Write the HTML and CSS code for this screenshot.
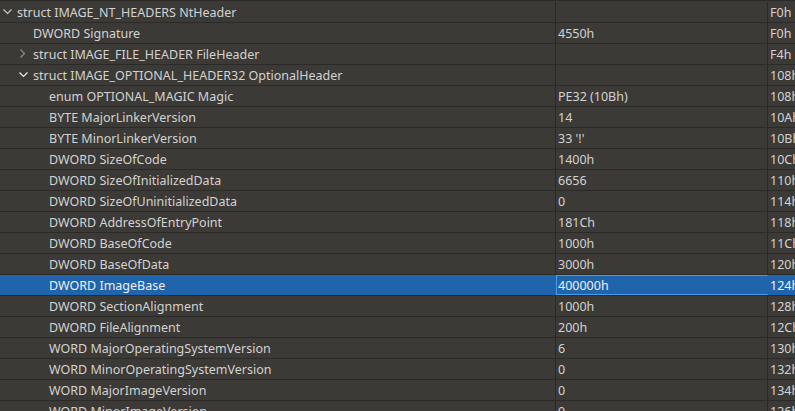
FILE: index.html
```html
<!DOCTYPE html>
<html>
<head>
<meta charset="utf-8">
<link rel="stylesheet" href="styles.css">
</head>
<body>
<div class="tree">
  <div class="row"><div class="c name l0"><span class="tog"><svg class="exp0" width="16" height="20" viewBox="0 0 16 20"><polyline points="2.5,7.5 6.5,11.5 10.5,7.5" /></svg></span>struct IMAGE_NT_HEADERS NtHeader</div><div class="c val"></div><div class="c off">F0h</div></div>
  <div class="row"><div class="c name l1"><span class="tog"></span>DWORD Signature</div><div class="c val">4550h</div><div class="c off">F0h</div></div>
  <div class="row"><div class="c name l1"><span class="tog"><svg class="col" width="16" height="20" viewBox="0 0 16 20"><polyline points="3.5,5.5 7.5,9.5 3.5,13.5" /></svg></span>struct IMAGE_FILE_HEADER FileHeader</div><div class="c val"></div><div class="c off">F4h</div></div>
  <div class="row"><div class="c name l1"><span class="tog"><svg class="exp" width="16" height="20" viewBox="0 0 16 20"><polyline points="2.5,7.5 6.5,11.5 10.5,7.5" /></svg></span>struct IMAGE_OPTIONAL_HEADER32 OptionalHeader</div><div class="c val"></div><div class="c off">108h</div></div>
  <div class="row"><div class="c name l2"><span class="tog"></span>enum OPTIONAL_MAGIC Magic</div><div class="c val">PE32 (10Bh)</div><div class="c off">108h</div></div>
  <div class="row"><div class="c name l2"><span class="tog"></span>BYTE MajorLinkerVersion</div><div class="c val">14</div><div class="c off">10Ah</div></div>
  <div class="row"><div class="c name l2"><span class="tog"></span>BYTE MinorLinkerVersion</div><div class="c val">33 '!'</div><div class="c off">10Bh</div></div>
  <div class="row"><div class="c name l2"><span class="tog"></span>DWORD SizeOfCode</div><div class="c val">1400h</div><div class="c off">10Ch</div></div>
  <div class="row"><div class="c name l2"><span class="tog"></span>DWORD SizeOfInitializedData</div><div class="c val">6656</div><div class="c off">110h</div></div>
  <div class="row"><div class="c name l2"><span class="tog"></span>DWORD SizeOfUninitializedData</div><div class="c val">0</div><div class="c off">114h</div></div>
  <div class="row"><div class="c name l2"><span class="tog"></span>DWORD AddressOfEntryPoint</div><div class="c val">181Ch</div><div class="c off">118h</div></div>
  <div class="row"><div class="c name l2"><span class="tog"></span>DWORD BaseOfCode</div><div class="c val">1000h</div><div class="c off">11Ch</div></div>
  <div class="row"><div class="c name l2"><span class="tog"></span>DWORD BaseOfData</div><div class="c val">3000h</div><div class="c off">120h</div></div>
  <div class="row sel"><div class="c name l2"><span class="tog"></span>DWORD ImageBase</div><div class="c val focus">400000h</div><div class="c off">124h</div></div>
  <div class="row"><div class="c name l2"><span class="tog"></span>DWORD SectionAlignment</div><div class="c val">1000h</div><div class="c off">128h</div></div>
  <div class="row"><div class="c name l2"><span class="tog"></span>DWORD FileAlignment</div><div class="c val">200h</div><div class="c off">12Ch</div></div>
  <div class="row"><div class="c name l2"><span class="tog"></span>WORD MajorOperatingSystemVersion</div><div class="c val">6</div><div class="c off">130h</div></div>
  <div class="row"><div class="c name l2"><span class="tog"></span>WORD MinorOperatingSystemVersion</div><div class="c val">0</div><div class="c off">132h</div></div>
  <div class="row"><div class="c name l2"><span class="tog"></span>WORD MajorImageVersion</div><div class="c val">0</div><div class="c off">134h</div></div>
  <div class="row"><div class="c name l2"><span class="tog"></span>WORD MinorImageVersion</div><div class="c val">0</div><div class="c off">136h</div></div>
</div>
</body>
</html>
```

FILE: styles.css
```css
html, body {
  margin: 0;
  padding: 0;
  background: #3c3a36;
  overflow: hidden;
}
.tree {
  width: 795px;
  height: 411px;
  overflow: hidden;
  border-top: 1px solid #2b2a27;
  padding-top: 1px;
  box-sizing: border-box;
  font-family: "Noto Sans", "Open Sans", sans-serif;
  font-size: 12.5px;
  color: #d2d2d2;
}
.row {
  display: grid;
  grid-template-columns: 556px 212px 1fr;
  height: 21px;
  border-bottom: 1px solid #2b2a27;
  box-sizing: border-box;
}
.c {
  height: 20px;
  line-height: 22px;
  white-space: nowrap;
  overflow: hidden;
  box-sizing: border-box;
}
.name, .val {
  border-right: 1px solid #2b2a27;
}
.name {
  display: flex;
  align-items: flex-start;
  padding-left: 1px;
}
.l1 { padding-left: 17px; }
.l2 { padding-left: 33px; }
.tog {
  display: inline-flex;
  width: 16px;
  height: 20px;
  flex: none;
}
.tog svg polyline {
  fill: none;
  stroke: #c8c8c8;
  stroke-width: 1.2;
}
.tog svg.col polyline { stroke: #8a8a88; }
.tog svg.exp polyline { stroke: #ececec; }
.val, .off {
  padding-left: 2px;
}
.sel {
  background: #2064ab;
  color: #f0f0f0;
}
.sel .name, .sel .val { border-right-color: #2064ab; }
.focus {
  border: 1px solid #4a9be9;
  line-height: 20px;
  padding-left: 1px;
}
```
